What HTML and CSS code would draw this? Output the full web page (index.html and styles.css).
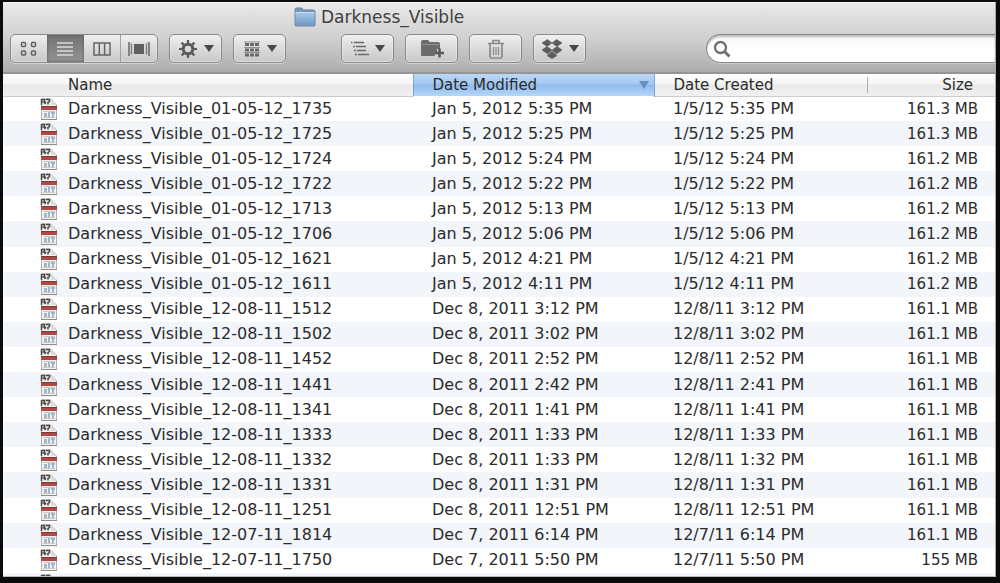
FILE: index.html
```html
<!DOCTYPE html>
<html lang="en">
<head>
<meta charset="utf-8">
<title>Darkness_Visible</title>
<link rel="stylesheet" href="styles.css">
</head>
<body>
<svg class="defs" aria-hidden="true">
  <symbol id="file" viewBox="0 0 18 22">
    <path d="M1.500 1h9l6 6v14.500h-15z" fill="#f3f2f0" stroke="#b5b3b0"/>
    <path d="M11 2l5 5h-5z" fill="#ddd"/>
    <path d="M1.500 1v6M1.500 1.500h3v2.500h-2M6 1.500h3.500v2L8 4.500v2M4.500 6l1.500-2" fill="none" stroke="#4a4542" stroke-width="1.500"/>
    <path d="M1 8.500h16v3.500h-16z" fill="#b04845"/>
    <path d="M1 8.500h16" stroke="#7b3a38"/>
    <path d="M4 15h3v4h-3zM8 14h2v5h-2zM11 14h4v2h-1v3h-2v-3h-1z" fill="#9fb8d2"/>
    <path d="M3 13.500h12M3 19.500h12" stroke="#d3c6bb"/>
    <path d="M1 21.500h16" stroke="#8f8d8b"/>
  </symbol>
</svg>
<main class="window">
  <header class="chrome">
    <h1 class="title">
      <svg width="22" height="20" viewBox="0 0 22 20" aria-hidden="true">
        <defs><linearGradient id="blue" x2="0" y2="1"><stop stop-color="#a9c8e6"/><stop offset="1" stop-color="#7099c4"/></linearGradient></defs>
        <path d="M1 18V3q0-2 1.500-2h5q1 0 1.500 2h10.500q1.500 0 1.500 1.500V18q0 1-1 1H2q-1 0-1-1z" fill="#7898ba" stroke="#6686a9"/>
        <path d="M1.500 5.500h19v13h-19z" fill="url(#blue)"/><path d="M1.500 5.500h19" stroke="#c4daee"/>
      </svg>
      <span>Darkness_Visible</span>
    </h1>
    <div class="toolbar">
      <div class="group" role="group" aria-label="View">
        <button class="seg" aria-label="Icons"><svg width="18" height="16" viewBox="0 0 18 16"><g fill="none" stroke="#606060" stroke-width="1.500"><rect x="1.500" y="1.500" width="4" height="4" rx="1"/><rect x="11.500" y="1.500" width="4" height="4" rx="1"/><rect x="1.500" y="10" width="4" height="4" rx="1"/><rect x="11.500" y="10" width="4" height="4" rx="1"/></g></svg></button>
        <button class="seg active" aria-label="List" aria-pressed="true"><svg width="18" height="16" viewBox="0 0 18 16"><path d="M1 2h16M1 6h16M1 10h16M1 14h16" stroke="#dcdcdc" stroke-width="1.500"/></svg></button>
        <button class="seg" aria-label="Columns"><svg width="18" height="16" viewBox="0 0 18 16"><path d="M1 2h16v12H1zM6.300 2v12M11.600 2v12" fill="none" stroke="#646464" stroke-width="1.500"/></svg></button>
        <button class="seg divided" aria-label="Cover Flow"><svg width="22" height="16" viewBox="0 0 22 16"><path d="M6 3h10v10H6z" fill="#606060"/><path d="M1 1v14M21 1v14" stroke="#666" stroke-width="1.500"/><path d="M3.500 2.500v11M18.500 2.500v11" stroke="#808080" stroke-width="1.500"/></svg></button>
      </div>
      <button class="btn" aria-label="Action">
        <svg width="20" height="20" viewBox="0 0 20 20"><g stroke="#5a5a5a"><circle cx="10" cy="10" r="4.800" fill="none" stroke-width="3"/><path d="M10 1v4M10 15v4M1 10h4M15 10h4M3.600 3.600l3 3M13.400 13.400l3 3M16.400 3.600l-3 3M6.600 13.400l-3 3" stroke-width="2.200"/></g></svg>
        <svg class="arrow" width="10" height="7" viewBox="0 0 10 7"><path d="M0 0h10L5 7z"/></svg>
      </button>
      <button class="btn" aria-label="Arrange">
        <svg width="18" height="16" viewBox="0 0 18 16"><path d="M1 1h16M1 6.500h16M1 11.500h16" stroke="#909090"/><path d="M2 3.500h4M7 3.500h4M12 3.500h4M2 9h4M7 9h4M12 9h4M2 14h4M7 14h4M12 14h4" stroke="#686868" stroke-width="3"/></svg>
        <svg class="arrow" width="10" height="7" viewBox="0 0 10 7"><path d="M0 0h10L5 7z"/></svg>
      </button>
      <button class="btn apart" aria-label="Outline">
        <svg width="18" height="16" viewBox="0 0 18 16"><path d="M0 1.500h1.500M3 1.500h10M2 5.500h2M5 5.500h10M3 9.500h2M6 9.500h9M4 13.500h2M7 13.500h11" stroke="#6a6a6a" stroke-width="1.500"/></svg>
        <svg class="arrow" width="10" height="7" viewBox="0 0 10 7"><path d="M0 0h10L5 7z"/></svg>
      </button>
      <button class="btn" aria-label="New Folder"><svg width="24" height="20" viewBox="0 0 24 20"><path d="M1 16V3q0-2 2-2h5l2 2h8q2 0 2 2v5h-3v3h-2v3q0 1-1 1H2q-1 0-1-1z" fill="#6c6c6c"/><path d="M2 5.500h17" stroke="#929292"/><path d="M19.500 9.500v9M15 14h9" stroke="#5a5a5a" stroke-width="2.500"/></svg></button>
      <button class="btn" aria-label="Trash"><svg width="18" height="20" viewBox="0 0 18 20"><g fill="none" stroke="#8a8a8a" stroke-width="1.700"><path d="M1 4.500h16M6 4V1.500h6V4M3 5v12.500q0 1.500 1.500 1.500h9q1.500 0 1.500-1.500V5"/><path d="M6.500 8v8M9 8v8M11.500 8v8" stroke-width="1.200"/></g></svg></button>
      <button class="btn" aria-label="Dropbox">
        <svg width="22" height="20" viewBox="0 0 22 20"><path d="M6.500.5l4.500 3.500-5 3.500L1 4zM15.500.5L11 4l5 3.500L21 4zM6 7.500l5 3.700-4.500 3.600L1 11zM16 7.500l-5 3.700 4.500 3.600L21 11zM11 12.500l4.500 3.500v1L11 19.500 6.500 17v-1z" fill="#5c5c5c" stroke="#5c5c5c" stroke-width=".6"/></svg>
        <svg class="arrow" width="10" height="7" viewBox="0 0 10 7"><path d="M0 0h10L5 7z"/></svg>
      </button>
      <label class="search">
        <svg width="18" height="18" viewBox="0 0 18 18" aria-hidden="true"><circle cx="7.500" cy="7.500" r="5.500" fill="none" stroke="#707070" stroke-width="2.300"/><path d="M11.500 11.500l5 5" stroke="#707070" stroke-width="3"/></svg>
        <input type="search" aria-label="Search">
      </label>
    </div>
  </header>
  <div class="listing">
    <table class="files">
      <colgroup><col class="c-name"><col class="c-modified"><col class="c-created"><col class="c-size"></colgroup>
      <thead><tr>
        <th scope="col" class="name">Name</th>
        <th scope="col" class="sorted" aria-sort="descending"><div class="sort"><span>Date Modified</span><svg width="10" height="8" viewBox="0 0 10 8" aria-hidden="true"><path d="M0 0h10L5 8z" fill="#6490be"/></svg></div></th>
        <th scope="col">Date Created</th>
        <th scope="col" class="size"><div class="rule">Size</div></th>
      </tr></thead>
      <tbody id="rows"></tbody>
    </table>
  </div>
</main>
<script src="script.js"></script>
</body>
</html>
```
FILE: styles.css
```css
* { box-sizing: border-box; }
body {
  margin: 0;
  height: 100vh;
  padding: 2px 4px 6px 3px;
  background: #0b0b0b;
  color: #2b2b2b;
  font: 16px/20px "DejaVu Sans", sans-serif;
}
.defs { position: absolute; width: 0; height: 0; }
.window {
  height: 100%;
  display: flex;
  flex-direction: column;
  overflow: hidden;
  background: #fff;
  border-right: 1px solid #aaa;
  border-bottom: 1px solid #bbb;
}
.chrome {
  flex: none;
  background: linear-gradient(#e9e9e9, #d0d0d0 50%, #adadad);
  border-top: 1px solid #f4f4f4;
  border-bottom: 2px solid #959595;
  padding-bottom: 9px;
}
.title {
  margin: 0;
  height: 31px;
  display: flex;
  align-items: center;
  gap: 5px;
  padding: 0 0 3px 291px;
  font-size: 17px;
  font-weight: 400;
  color: #404040;
}
.toolbar { display: flex; gap: 11px; padding-left: 7px; }
button { font: inherit; padding: 0; }
.group, .btn {
  flex: none;
  height: 29px;
  border: 1px solid #8a8a8a;
  border-radius: 5px;
  background: linear-gradient(#f0f0f0, #dadada 50%, #c8c8c8);
  box-shadow: 0 1px 0 #d5d5d5, inset 0 0 1px 1px #f1f1f180;
}
.group { display: flex; width: 148px; overflow: hidden; }
.seg {
  flex: 1;
  display: grid;
  place-items: center;
  border: 0;
  background: none;
}
.seg.active { background: linear-gradient(#747474, #929292); box-shadow: inset 0 0 3px #555; }
.seg.divided { border-left: 1px solid #a0a0a0; }
.btn {
  width: 53px;
  display: flex;
  align-items: center;
  justify-content: center;
  gap: 6px;
}
.apart { margin-left: 44px; }
.arrow { fill: #484848; }
.search {
  flex: 1;
  min-width: 80px;
  height: 29px;
  margin-left: 109px;
  display: flex;
  align-items: center;
  gap: 6px;
  padding-left: 6px;
  border: 1px solid #888;
  border-right: 0;
  border-radius: 15px 0 0 15px;
  background: linear-gradient(#f4f6f5, #fff 50%);
  box-shadow: inset 0 2px 2px #bbb, 0 1px 0 #ccc;
}
.search input { flex: 1; min-width: 0; border: 0; outline: 0; background: none; font: inherit; }
.listing { flex: 1; min-height: 0; overflow: hidden; }
.files { width: 100%; height: 524px; table-layout: fixed; border-collapse: collapse; }
.c-name { width: 410px; }
.c-modified { width: 241px; }
.c-created { width: 213px; }
th {
  height: 22px;
  padding: 0 0 0 19px;
  text-align: left;
  font-size: 15px;
  font-weight: 400;
  background: linear-gradient(#fff, #f5f5f5 45%, #e9e9e9 50%, #f0f0f0);
  border-bottom: 1px solid #cdcdcd;
}
th.name { padding-left: 65px; }
th.sorted {
  padding-right: 5px;
  background: linear-gradient(#bcd7f3, #a3c8f1 45%, #8fbaed 50%, #b5d7f8);
  border: solid #77a5d5;
  border-width: 0 1px;
}
.sort { display: flex; align-items: center; justify-content: space-between; }
th.size { padding: 0 22px 0 0; }
.rule { border-left: 1px solid #b0b0b0; line-height: 16px; text-align: right; }
td { height: 25px; padding: 0 0 0 19px; white-space: nowrap; }
td.name { padding-left: 37px; }
td.size { padding: 0 17px 0 0; text-align: right; font-size: 15px; }
tbody tr:nth-child(even) { background: #f2f5fa; }
.entry { display: flex; align-items: center; gap: 10px; }
```
FILE: script.js
```js
const files = [
  ["01-05-12_1735", "Jan 5, 2012 5:35 PM", "1/5/12 5:35 PM", "161.3 MB"],
  ["01-05-12_1725", "Jan 5, 2012 5:25 PM", "1/5/12 5:25 PM", "161.3 MB"],
  ["01-05-12_1724", "Jan 5, 2012 5:24 PM", "1/5/12 5:24 PM", "161.2 MB"],
  ["01-05-12_1722", "Jan 5, 2012 5:22 PM", "1/5/12 5:22 PM", "161.2 MB"],
  ["01-05-12_1713", "Jan 5, 2012 5:13 PM", "1/5/12 5:13 PM", "161.2 MB"],
  ["01-05-12_1706", "Jan 5, 2012 5:06 PM", "1/5/12 5:06 PM", "161.2 MB"],
  ["01-05-12_1621", "Jan 5, 2012 4:21 PM", "1/5/12 4:21 PM", "161.2 MB"],
  ["01-05-12_1611", "Jan 5, 2012 4:11 PM", "1/5/12 4:11 PM", "161.2 MB"],
  ["12-08-11_1512", "Dec 8, 2011 3:12 PM", "12/8/11 3:12 PM", "161.1 MB"],
  ["12-08-11_1502", "Dec 8, 2011 3:02 PM", "12/8/11 3:02 PM", "161.1 MB"],
  ["12-08-11_1452", "Dec 8, 2011 2:52 PM", "12/8/11 2:52 PM", "161.1 MB"],
  ["12-08-11_1441", "Dec 8, 2011 2:42 PM", "12/8/11 2:41 PM", "161.1 MB"],
  ["12-08-11_1341", "Dec 8, 2011 1:41 PM", "12/8/11 1:41 PM", "161.1 MB"],
  ["12-08-11_1333", "Dec 8, 2011 1:33 PM", "12/8/11 1:33 PM", "161.1 MB"],
  ["12-08-11_1332", "Dec 8, 2011 1:33 PM", "12/8/11 1:32 PM", "161.1 MB"],
  ["12-08-11_1331", "Dec 8, 2011 1:31 PM", "12/8/11 1:31 PM", "161.1 MB"],
  ["12-08-11_1251", "Dec 8, 2011 12:51 PM", "12/8/11 12:51 PM", "161.1 MB"],
  ["12-07-11_1814", "Dec 7, 2011 6:14 PM", "12/7/11 6:14 PM", "161.1 MB"],
  ["12-07-11_1750", "Dec 7, 2011 5:50 PM", "12/7/11 5:50 PM", "155 MB"]
];
const icon = '<svg width="18" height="22" aria-hidden="true"><use href="#file"/></svg>';
const row = (name, modified, created, size) =>
  `<tr><td class="name"><div class="entry">${icon}<span>${name}</span></div></td>` +
  `<td>${modified}</td><td>${created}</td><td class="size">${size}</td></tr>`;
document.getElementById("rows").innerHTML =
  files.map(f => row("Darkness_Visible_" + f[0], f[1], f[2], f[3])).join("") + row("", "", "", "");
```
